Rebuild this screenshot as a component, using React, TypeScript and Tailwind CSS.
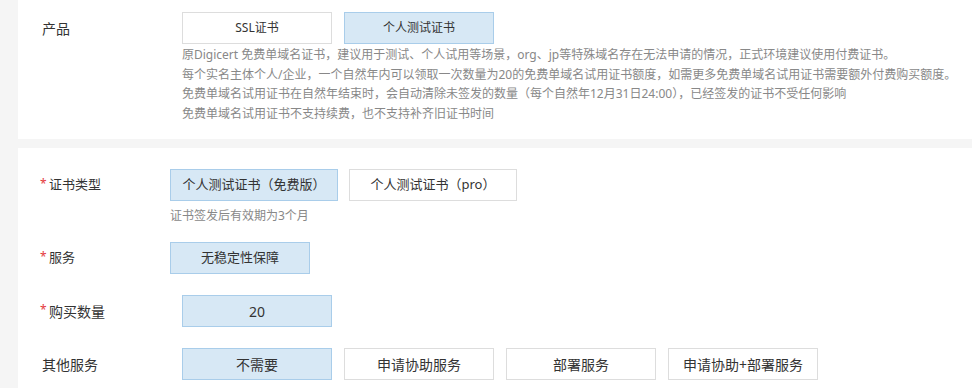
import React from 'react';

const FONT = { fontFamily: '"Microsoft YaHei", "Noto Sans", "Noto Sans CJK SC", sans-serif' };

const Option: React.FC<{
  label: string;
  active?: boolean;
  width: string;
  size: string;
}> = ({ label, active, width, size }) => (
  <div
    className={`${width} ${size} h-8 flex items-center justify-center border text-[#333] ${
      active ? 'bg-[#d7e8f5] border-[#a9cdea]' : 'bg-white border-[#dddddd]'
    }`}
  >
    {label}
  </div>
);

const Label: React.FC<{ text: string; required?: boolean; width: string; size: string }> = ({
  text,
  required,
  width,
  size,
}) => (
  <div className={`${width} ${size} h-8 flex items-center text-[#333] shrink-0`}>
    {required ? (
      <span className="text-[#e4393c] text-[12px] w-[9px] leading-none mt-[-2px]">*</span>
    ) : null}
    <span>{text}</span>
  </div>
);

export default function App() {
  return (
    <div className="w-[972px] h-[388px] overflow-hidden bg-[#f5f5f5] pl-[18px]" style={FONT}>
      {/* 产品 */}
      <div className="bg-white h-[139px] pl-[24px] pt-[12px] flex">
        <Label text="产品" width="w-[140px]" size="text-[14px]" />
        <div>
          <div className="flex gap-3">
            <Option label="SSL证书" width="w-[150px]" size="text-[12px]" />
            <Option label="个人测试证书" active width="w-[150px]" size="text-[12px]" />
          </div>
          <div className="mt-[1px] text-[12px] leading-[19.5px] text-[#888]">
            <p>原Digicert 免费单域名证书，建议用于测试、个人试用等场景，org、jp等特殊域名存在无法申请的情况，正式环境建议使用付费证书。</p>
            <p>每个实名主体个人/企业，一个自然年内可以领取一次数量为20的免费单域名试用证书额度，如需更多免费单域名试用证书需要额外付费购买额度。</p>
            <p>免费单域名试用证书在自然年结束时，会自动清除未签发的数量（每个自然年12月31日24:00），已经签发的证书不受任何影响</p>
            <p>免费单域名试用证书不支持续费，也不支持补齐旧证书时间</p>
          </div>
        </div>
      </div>

      {/* 配置 */}
      <div className="bg-white mt-[9px] h-[240px] pl-[22px] pt-[21px]">
        <div className="flex">
          <Label text="证书类型" required width="w-[130px]" size="text-[13px]" />
          <div>
            <div className="flex gap-[11px]">
              <Option label="个人测试证书（免费版）" active width="w-[168px]" size="text-[13px]" />
              <Option label="个人测试证书（pro）" width="w-[168px]" size="text-[13px]" />
            </div>
            <p className="mt-[5px] text-[12px] leading-[20px] text-[#888]">证书签发后有效期为3个月</p>
          </div>
        </div>

        <div className="flex mt-[16px]">
          <Label text="服务" required width="w-[130px]" size="text-[13px]" />
          <Option label="无稳定性保障" active width="w-[140px]" size="text-[13px]" />
        </div>

        <div className="flex mt-[21px]">
          <Label text="购买数量" required width="w-[142px]" size="text-[14px]" />
          <Option label="20" active width="w-[150px]" size="text-[14px]" />
        </div>

        <div className="flex mt-[21px] pl-[2px]">
          <Label text="其他服务" width="w-[140px]" size="text-[14px]" />
          <div className="flex gap-3">
            <Option label="不需要" active width="w-[150px]" size="text-[14px]" />
            <Option label="申请协助服务" width="w-[150px]" size="text-[14px]" />
            <Option label="部署服务" width="w-[150px]" size="text-[14px]" />
            <Option label="申请协助+部署服务" width="w-[150px]" size="text-[14px]" />
          </div>
        </div>
      </div>
    </div>
  );
}
